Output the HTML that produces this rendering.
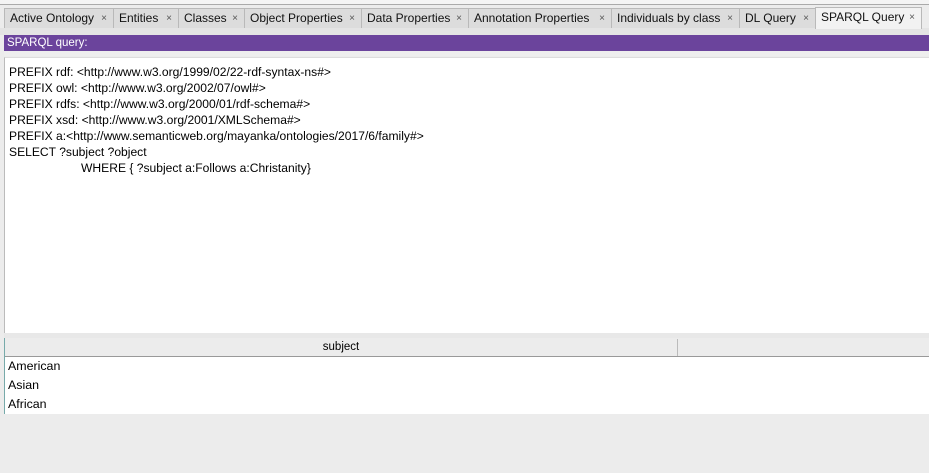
<!DOCTYPE html>
<html><head><style>
body{margin:0;width:929px;height:473px;background:#ececec;font-family:"Liberation Sans",sans-serif;position:relative;overflow:hidden}
.abs{position:absolute}
.tab{position:absolute;top:8px;height:20px;background:#dcdcdc;border:1px solid #b9b9b9;border-bottom:none;box-sizing:border-box;font-size:12px;line-height:19px;padding-left:5px;color:#111}
.tab span{position:absolute;right:6px;font-size:10px;color:#555}
.q{position:absolute;left:9px;font-size:12.1px;color:#000;white-space:pre}
.r{position:absolute;left:8px;font-size:12.4px;color:#000}
</style></head><body>
<div class="abs" style="left:0;top:0;width:929px;height:4px;background:#f4f4f4;border-bottom:1px solid #aaa"></div>
<div class="abs" style="left:0;top:28px;width:929px;height:7px;background:#e4e4e4"></div>
<div class="tab" style="left:4px;width:110px">Active Ontology<span>×</span></div>
<div class="tab" style="left:113px;width:66px">Entities<span>×</span></div>
<div class="tab" style="left:178px;width:67px">Classes<span>×</span></div>
<div class="tab" style="left:244px;width:118px">Object Properties<span>×</span></div>
<div class="tab" style="left:361px;width:108px">Data Properties<span>×</span></div>
<div class="tab" style="left:468px;width:144px">Annotation Properties<span>×</span></div>
<div class="tab" style="left:611px;width:129px">Individuals by class<span>×</span></div>
<div class="tab" style="left:739px;width:77px">DL Query<span>×</span></div>
<div class="tab" style="left:815px;top:7px;height:22px;width:107px;background:#f2f2f2">SPARQL Query<span>×</span></div>
<div class="abs" style="left:4px;top:35px;width:925px;height:16px;background:#6b449c;color:#fff;font-size:11.5px;line-height:16px;padding-left:3px">SPARQL query:</div>
<div class="abs" style="left:4px;top:51px;width:925px;height:5px;background:#eee"></div>
<div class="abs" style="left:4px;top:57px;width:925px;height:276px;background:#fff;border-top:1px solid #ddd;border-left:1px solid #bbb"></div>
<div class="q" style="top:65px">PREFIX rdf: &lt;http://www.w3.org/1999/02/22-rdf-syntax-ns#&gt;</div>
<div class="q" style="top:81px">PREFIX owl: &lt;http://www.w3.org/2002/07/owl#&gt;</div>
<div class="q" style="top:97px">PREFIX rdfs: &lt;http://www.w3.org/2000/01/rdf-schema#&gt;</div>
<div class="q" style="top:113px">PREFIX xsd: &lt;http://www.w3.org/2001/XMLSchema#&gt;</div>
<div class="q" style="top:129px">PREFIX a:&lt;http://www.semanticweb.org/mayanka/ontologies/2017/6/family#&gt;</div>
<div class="q" style="top:145px">SELECT ?subject ?object</div>
<div class="q" style="top:161px;left:81px">WHERE { ?subject a:Follows a:Christanity}</div>
<div class="abs" style="left:4px;top:333px;width:925px;height:5px;background:#e8e8e8"></div>
<div class="abs" style="left:5px;top:338px;width:924px;height:19px;background:#ececec;border-bottom:1px solid #999;box-sizing:border-box"></div>
<div class="abs" style="left:677px;top:339px;width:1px;height:17px;background:#bbb"></div>
<div class="abs" style="left:5px;top:341px;width:672px;text-align:center;font-size:11.5px">subject</div>
<div class="abs" style="left:5px;top:357px;width:924px;height:57px;background:#fff"></div>
<div class="abs" style="left:4px;top:338px;width:1px;height:76px;background:#7aa"></div>
<div class="r" style="top:359px">American</div>
<div class="r" style="top:378px">Asian</div>
<div class="r" style="top:397px">African</div>
</body></html>
